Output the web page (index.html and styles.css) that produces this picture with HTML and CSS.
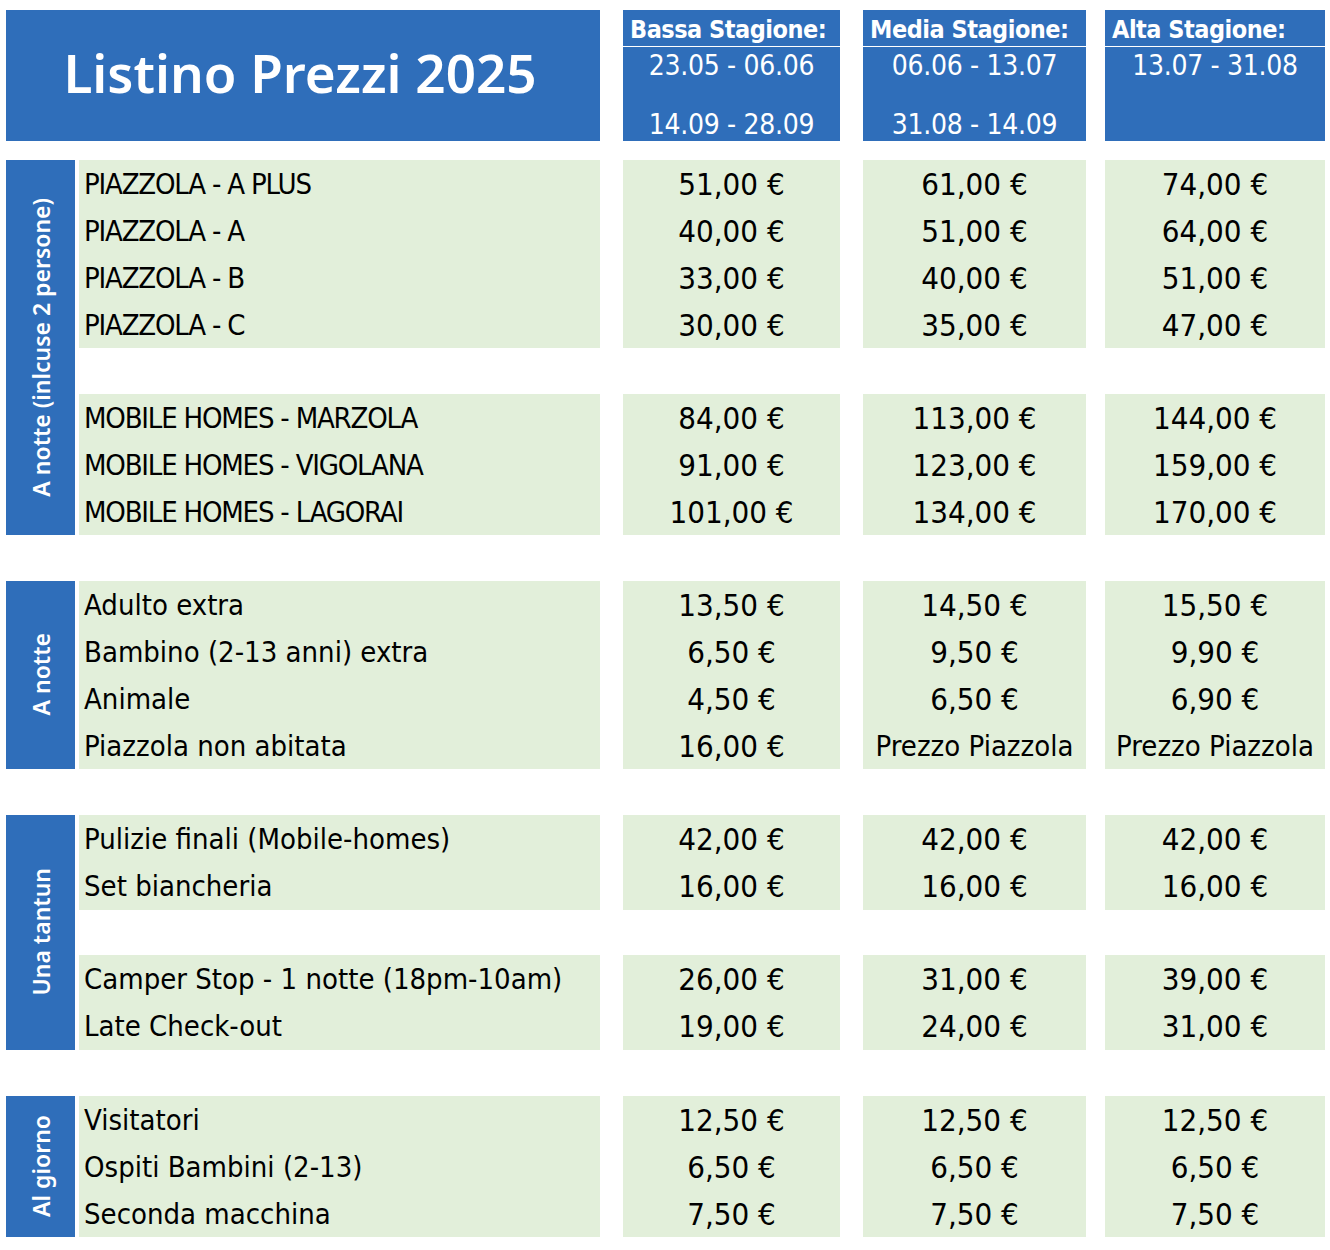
FILE: index.html
```html
<!DOCTYPE html>
<html lang="it">
<head>
<meta charset="utf-8">
<title>Listino Prezzi 2025</title>
<link rel="stylesheet" href="styles.css">
</head>
<body>
<div class="sheet">
  <header class="head">
    <div class="title">Listino Prezzi 2025</div>
    <div class="season s1">
      <div class="season-name">Bassa Stagione:</div>
      <div class="season-dates"><span>23.05 - 06.06</span><span>14.09 - 28.09</span></div>
    </div>
    <div class="season s2">
      <div class="season-name">Media Stagione:</div>
      <div class="season-dates"><span>06.06 - 13.07</span><span>31.08 - 14.09</span></div>
    </div>
    <div class="season s3">
      <div class="season-name">Alta Stagione:</div>
      <div class="season-dates"><span>13.07 - 31.08</span></div>
    </div>
  </header>

  <section class="block b1">
    <div class="label"><span>A notte (inlcuse 2 persone)</span></div>
    <div class="item caps">PIAZZOLA - A PLUS</div><div class="price c1">51,00 €</div><div class="price c2">61,00 €</div><div class="price c3">74,00 €</div>
    <div class="item caps">PIAZZOLA - A</div><div class="price c1">40,00 €</div><div class="price c2">51,00 €</div><div class="price c3">64,00 €</div>
    <div class="item caps">PIAZZOLA - B</div><div class="price c1">33,00 €</div><div class="price c2">40,00 €</div><div class="price c3">51,00 €</div>
    <div class="item caps">PIAZZOLA - C</div><div class="price c1">30,00 €</div><div class="price c2">35,00 €</div><div class="price c3">47,00 €</div>
    <div class="spacer"></div>
    <div class="item caps">MOBILE HOMES - MARZOLA</div><div class="price c1">84,00 €</div><div class="price c2">113,00 €</div><div class="price c3">144,00 €</div>
    <div class="item caps">MOBILE HOMES - VIGOLANA</div><div class="price c1">91,00 €</div><div class="price c2">123,00 €</div><div class="price c3">159,00 €</div>
    <div class="item caps">MOBILE HOMES - LAGORAI</div><div class="price c1">101,00 €</div><div class="price c2">134,00 €</div><div class="price c3">170,00 €</div>
  </section>

  <section class="block b2">
    <div class="label"><span>A notte</span></div>
    <div class="item">Adulto extra</div><div class="price c1">13,50 €</div><div class="price c2">14,50 €</div><div class="price c3">15,50 €</div>
    <div class="item">Bambino (2-13 anni) extra</div><div class="price c1">6,50 €</div><div class="price c2">9,50 €</div><div class="price c3">9,90 €</div>
    <div class="item">Animale</div><div class="price c1">4,50 €</div><div class="price c2">6,50 €</div><div class="price c3">6,90 €</div>
    <div class="item">Piazzola non abitata</div><div class="price c1">16,00 €</div><div class="price c2 text">Prezzo Piazzola</div><div class="price c3 text">Prezzo Piazzola</div>
  </section>

  <section class="block b3">
    <div class="label"><span>Una tantun</span></div>
    <div class="item">Pulizie finali (Mobile-homes)</div><div class="price c1">42,00 €</div><div class="price c2">42,00 €</div><div class="price c3">42,00 €</div>
    <div class="item">Set biancheria</div><div class="price c1">16,00 €</div><div class="price c2">16,00 €</div><div class="price c3">16,00 €</div>
    <div class="spacer"></div>
    <div class="item">Camper Stop - 1 notte (18pm-10am)</div><div class="price c1">26,00 €</div><div class="price c2">31,00 €</div><div class="price c3">39,00 €</div>
    <div class="item">Late Check-out</div><div class="price c1">19,00 €</div><div class="price c2">24,00 €</div><div class="price c3">31,00 €</div>
  </section>

  <section class="block b4">
    <div class="label"><span>Al giorno</span></div>
    <div class="item">Visitatori</div><div class="price c1">12,50 €</div><div class="price c2">12,50 €</div><div class="price c3">12,50 €</div>
    <div class="item">Ospiti Bambini (2-13)</div><div class="price c1">6,50 €</div><div class="price c2">6,50 €</div><div class="price c3">6,50 €</div>
    <div class="item">Seconda macchina</div><div class="price c1">7,50 €</div><div class="price c2">7,50 €</div><div class="price c3">7,50 €</div>
  </section>
</div>
</body>
</html>
```

FILE: styles.css
```css
* { box-sizing: border-box; }

body {
  margin: 0;
  background: #ffffff;
  font-family: "DejaVu Sans Condensed", "DejaVu Sans", sans-serif;
  font-stretch: condensed;
  color: #000000;
}

.sheet {
  padding: 10px 0 0 6px;
  display: flex;
  flex-direction: column;
  gap: 46px;
}

.head,
.block {
  display: grid;
  grid-template-columns: 69px 4px 521px 23px 217px 23px 223px 19px 220px;
}

.head {
  height: 131px;
  margin-bottom: -27px;
}

.title {
  grid-column: 1 / 4;
  background: #2f6eba;
  color: #ffffff;
  font-family: "Noto Sans", "Open Sans", sans-serif;
  font-stretch: normal;
  font-weight: 600;
  font-size: 53px;
  display: flex;
  align-items: center;
  justify-content: center;
  padding: 0 6px 6px 0;
}

.season {
  display: flex;
  flex-direction: column;
  gap: 1px;
  color: #ffffff;
}

.s1 { grid-column: 5; }
.s2 { grid-column: 7; }
.s3 { grid-column: 9; }

.season-name {
  height: 36px;
  background: #2f6eba;
  font-weight: 700;
  font-size: 25px;
  letter-spacing: -0.5px;
  padding: 2px 0 0 7px;
  display: flex;
  align-items: center;
  white-space: nowrap;
}

.season-dates {
  flex: 1;
  background: #2f6eba;
  display: flex;
  flex-direction: column;
  justify-content: space-between;
  align-items: center;
  font-size: 28px;
  letter-spacing: -0.3px;
  line-height: 1;
  padding: 5px 0 2px;
}

.b1 { grid-template-rows: repeat(4, 47px) 45.5px repeat(3, 47px); }
.b2 { grid-template-rows: repeat(4, 47px); }
.b3 { grid-template-rows: repeat(2, 47.5px) 45px repeat(2, 47.5px); }
.b4 { grid-template-rows: repeat(3, 47px); }

.label {
  grid-column: 1;
  grid-row: 1 / -1;
  background: #2f6eba;
  color: #ffffff;
  display: flex;
  align-items: center;
  justify-content: center;
}

.label span {
  writing-mode: vertical-rl;
  transform: rotate(180deg);
  font-family: "Noto Sans", "Open Sans", sans-serif;
  font-stretch: normal;
  font-weight: 600;
  font-size: 23px;
  white-space: nowrap;
}

.item,
.price {
  background: #e2efda;
  font-size: 29px;
  line-height: 1;
  display: flex;
  align-items: center;
  padding-top: 2px;
  white-space: nowrap;
}

.item {
  grid-column: 3;
  padding-left: 5px;
}

.item.caps {
  letter-spacing: -1.2px;
}

.price {
  justify-content: center;
  font-size: 31px;
}

.price.text {
  font-size: 29px;
}

.c1 { grid-column: 5; }
.c2 { grid-column: 7; }
.c3 { grid-column: 9; }

.spacer {
  grid-column: 3 / -1;
}
```
